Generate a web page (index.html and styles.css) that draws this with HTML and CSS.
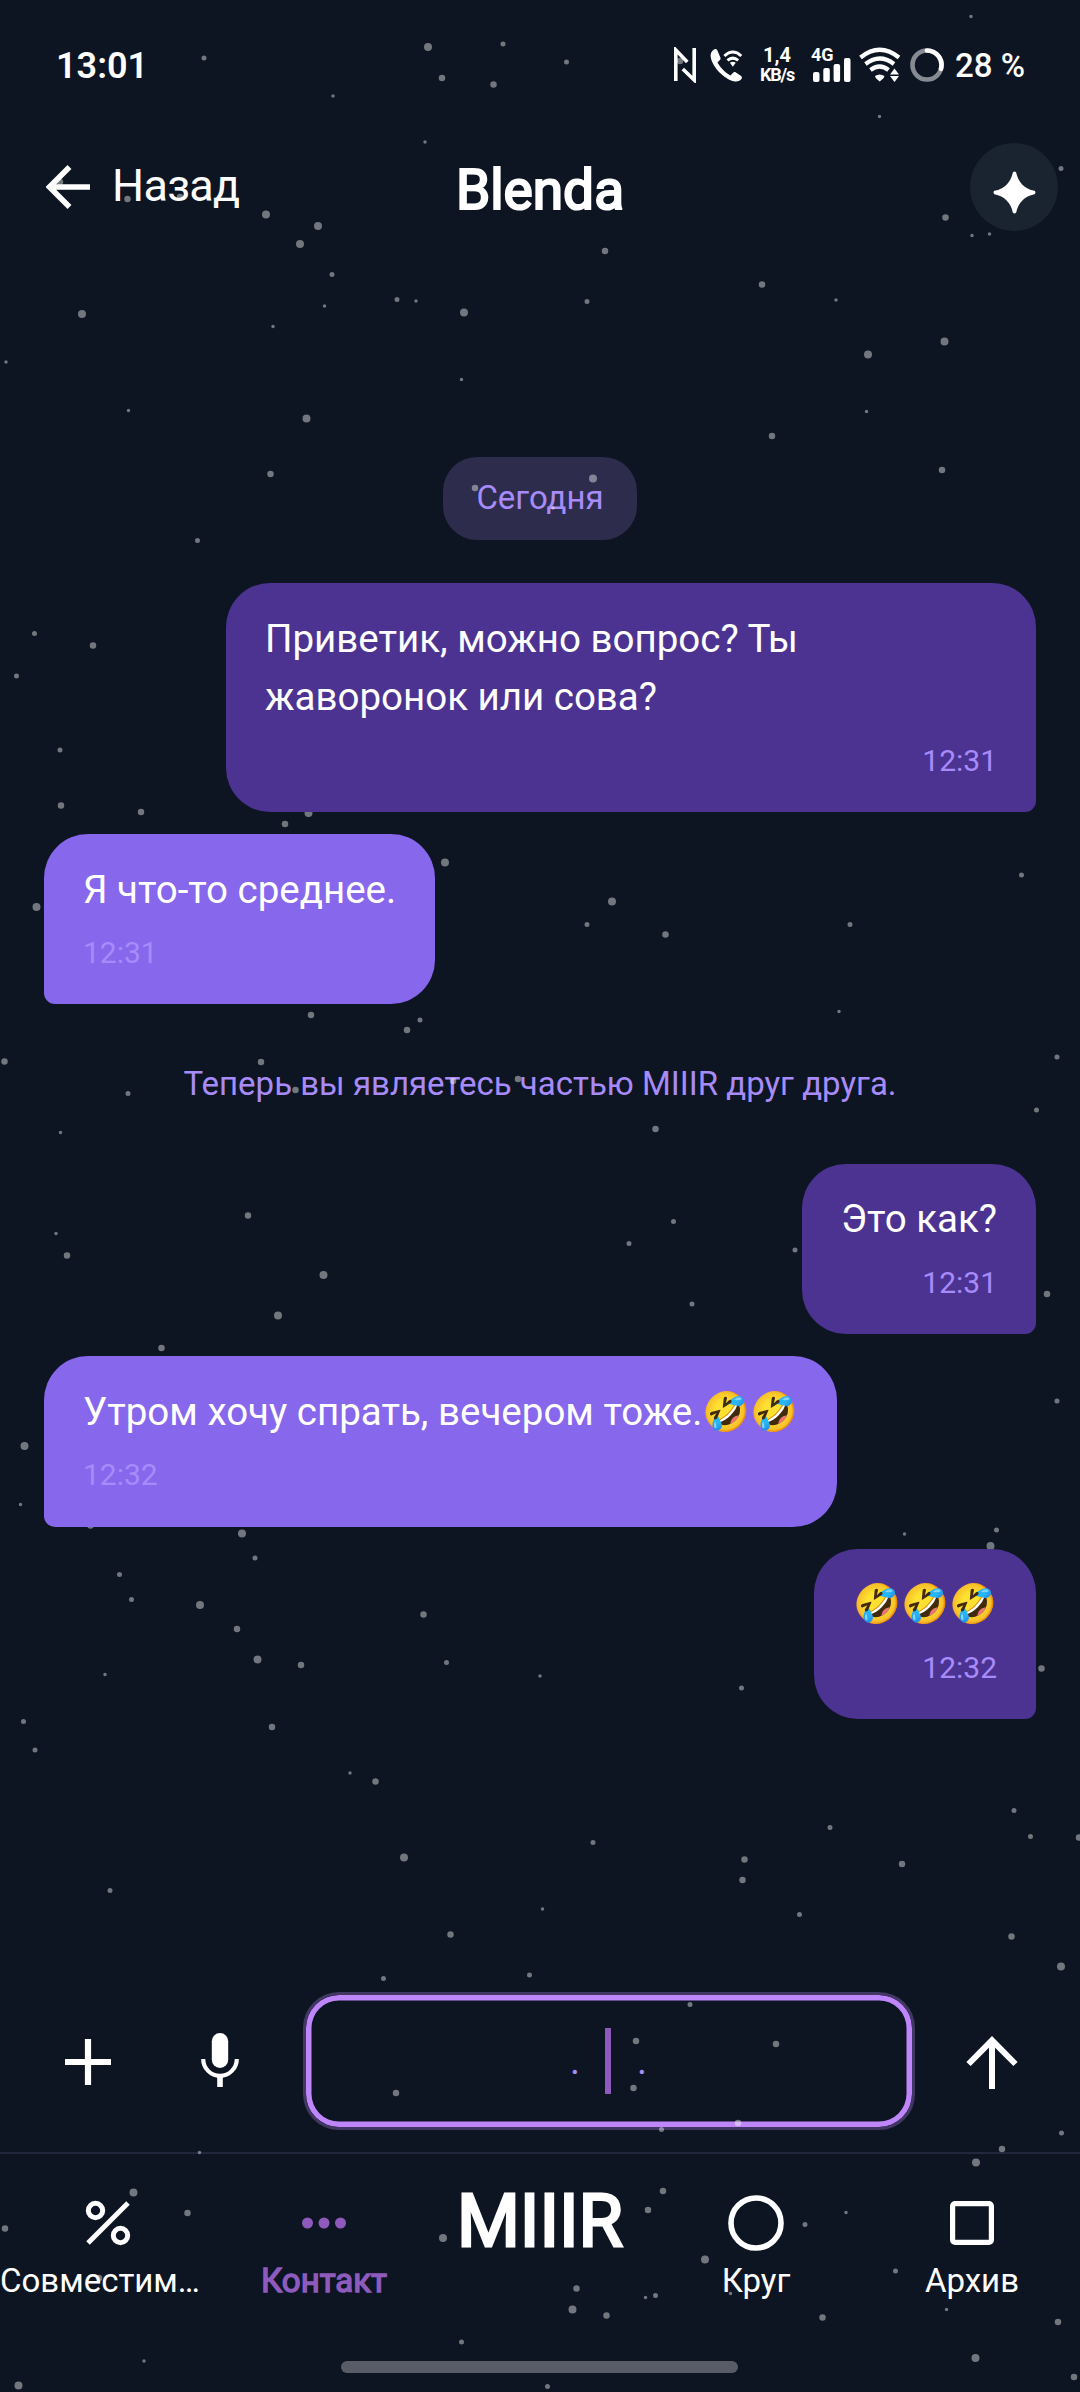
FILE: index.html
```html
<!DOCTYPE html>
<html lang="ru">
<head>
<meta charset="utf-8">
<title>Blenda</title>
<link rel="stylesheet" href="styles.css">
</head>
<body>
<div class="app">
  <svg class="stars" viewBox="0 0 1080 2392" aria-hidden="true">
    <path stroke-width="3.5" d="M324.5 306h0M461.5 379.5h0M333 96h0M425 142h0M416 301h0M273 326.5h0M6 362h0M971 16.5h0M879.5 116.5h0M972 235.5h0M989.5 234h0M836 300h0M128.5 410.5h0M866.5 411.5h0M553 508h0M839 1011.5h0M60.5 1132.5h0M56 1233.5h0M20.5 1504.5h0M904.5 1534h0M105 1674.5h0M350 1773h0M540 1676h0M542.5 1909h0M199.5 2152.5h0M144 2361h0M846 2212.5h0M645.5 2297.5h0M730.5 2293.5h0M946.5 2309.5h0"/>
    <path stroke-width="5" d="M503 44h0M204 58h0M332 274.5h0M397 299.5h0M566.5 62h0M1061 168.5h0M587 301.5h0M197.5 540.5h0M34.5 633.5h0M16.5 676h0M60 750h0M420 1020h0M1021.5 875h0M587 924.5h0M850 924.5h0M128 1093.5h0M1057 1057h0M1036.5 1110h0M673.5 1221.5h0M629 1243.5h0M795 1250h0M692 1304h0M1057 1401h0M996.5 1530h0M255 1558h0M119.5 1574.5h0M131.5 1599.5h0M446.5 1662.5h0M23.5 1721.5h0M35 1750h0M110 1890.5h0M741.5 1688h0M1014 1810.5h0M830 1827.5h0M1030.5 1836.5h0M593 1842.5h0M799.5 1914.5h0M383.5 1978.5h0M529.5 1975h0M461.5 2342h0M690 2004.5h0M661.5 2129.5h0M1061.5 2133h0M805 2224.5h0M895.5 2271h0M655.5 2295.5h0M547.5 2386.5h0"/>
    <path stroke-width="6.5" d="M442 78h0M493.5 84.5h0M60 182h0M127.5 199h0M180 197h0M680 61h0M945.5 217.5h0M605 251h0M762 284.5h0M270.5 474h0M475 488h0M93 645.5h0M61 805.5h0M141 812h0M285 824h0M311 1015h0M407 1030h0M772 436h0M942 470h0M665.5 934.5h0M4.5 1061.5h0M261 1062h0M295.5 1090h0M453 1081h0M518 1079h0M248 1215.5h0M67 1255.5h0M161.5 1348h0M90.5 1525.5h0M655.5 1129h0M1047 1294h0M237 1629h0M301 1665h0M423.5 1614.5h0M272 1727h0M375.5 1781.5h0M450.5 1934.5h0M1041.5 1668.5h0M1079 1837.5h0M744.5 1859.5h0M742.5 1880h0M902 1864h0M1011.5 1936.5h0M396 2093h0M187.5 2213h0M5 2228.5h0M99 2278h0M636 2041h0M776 2044h0M633.5 2088h0M738 2123h0M1002 2149h0M663 2191h0M648 2210h0M576.5 2288.5h0M606.5 2315.5h0M822.5 2317.5h0M1058 2322h0M1074 2377h0"/>
    <path stroke-width="8" d="M428 47h0M266 214.5h0M318 226h0M300 244h0M464 312.5h0M82 314h0M868 354.5h0M944.5 341.5h0M306.5 418.5h0M308.5 813h0M445 862.5h0M36.5 907h0M593 478.5h0M612 901.5h0M323.5 1275h0M278 1315.5h0M24.5 1446h0M242 1533.5h0M200 1605h0M257.5 1659.5h0M404 1857.5h0M990.5 1546h0M133.5 2192.5h0M443 2238h0M18.5 2385.5h0M1061 1966.5h0M976 2162.5h0M705 2259.5h0M572.5 2309.5h0M975.5 2358h0"/>
  </svg>

  <div class="statusbar">
    <span class="clock">13:01</span>
    <div class="indicators">
      <svg class="nfc" viewBox="0 0 24 36" fill="none" stroke="#fff" stroke-width="3.6"><path d="M2.800 34V3l11.500 12M21.200 1v32L9.800 22"/></svg>
      <svg class="call" viewBox="0 0 36 36"><path fill="#fff" d="M5.500 1.200C2.500 2.800 1.200 6 1.800 9.500 3.500 19.500 15 31.500 25.500 34.300c3.500.8 6.500-.2 8-2.600.7-1.200.3-2.300-.8-3.100l-5-3.400c-1.100-.7-2.300-.5-3.100.4l-2.600 2.600C16.800 25.500 11.500 20 8.700 15l2.500-2.600c.8-.8.9-1.900.4-3L8.500 2.400C7.900 1.100 6.700.6 5.500 1.200z"/><path d="M15.800 8.200q8.700-8 17.400 0M19 12.800q5.500-4.800 11 0" fill="none" stroke="#fff" stroke-width="3"/><path d="M21.500 15.200q3-2 6 0l-3 4z" fill="#fff"/></svg>
      <div class="speed"><span>1,4</span><span>KB/s</span></div>
      <div class="cell"><span>4G</span>
        <svg viewBox="0 0 38 24" fill="#fff"><rect x="0" y="14" width="6.500" height="10" rx="2"/><rect x="10.300" y="10" width="6.500" height="14" rx="2"/><rect x="20.600" y="6" width="6.500" height="18" rx="2"/><rect x="31" y="0" width="6.500" height="24" rx="2"/></svg>
      </div>
      <svg class="wifi" viewBox="0 0 42 36"><path d="M1.500 10.500q19.200-15.500 38.500 0M6.500 17q14.200-11 28.500 0M11.500 23q9.200-7 18 0" fill="none" stroke="#fff" stroke-width="4.200"/><path fill="#fff" d="M16 29q4.700-3 9.400 0 0 2-4.700 5.500Q16 31 16 29zM35.500 21.500l4.500 6h-9zM31 29h9l-4.500 6z"/></svg>
      <svg class="battery" viewBox="0 0 34 34" fill="none" stroke-width="4.600"><circle cx="17" cy="17" r="14.500" stroke="#868a91"/><path d="M17 2.500A14.500 14.500 0 0 1 31 20.800" stroke="#fff" stroke-linecap="round"/></svg>
      <span class="percent">28 %</span>
    </div>
  </div>

  <header class="header">
    <a class="back">
      <svg viewBox="0 0 44 44" fill="none" stroke="#fff" stroke-width="5.500"><path d="M23.500 2L3.500 22l20 20M4 22h40"/></svg>
      <span>Назад</span>
    </a>
    <h1>Blenda</h1>
    <button class="spark"><svg viewBox="0 0 44 44"><path fill="#fff" d="M20.300 1.500q1.700-2 3.400 0Q27 17 42.500 20.300q2 1.700 0 3.400Q27 27 23.700 42.500q-1.700 2-3.400 0Q17 27 1.500 23.700q-2-1.700 0-3.400Q17 17 20.300 1.500z"/></svg></button>
  </header>

  <main class="chat">
    <div class="day">Сегодня</div>
    <div class="msg out"><p>Приветик, можно вопрос? Ты жаворонок или сова?</p><time>12:31</time></div>
    <div class="msg in"><p>Я что-то среднее.</p><time>12:31</time></div>
    <div class="notice">Теперь вы являетесь частью MIIIR друг друга.</div>
    <div class="msg out"><p>Это как?</p><time>12:31</time></div>
    <div class="msg in"><p>Утром хочу спрать, вечером тоже.🤣🤣</p><time>12:32</time></div>
    <div class="msg out"><p>🤣🤣🤣</p><time>12:32</time></div>
  </main>

  <div class="composer">
    <svg class="plus" viewBox="0 0 46 46" stroke="#fff" stroke-width="6.200"><path d="M23 0v46M0 23h46"/></svg>
    <svg class="mic" viewBox="0 0 38 54" fill="none" stroke="#fff"><rect x="10.800" y="0" width="16.400" height="35" rx="8.200" fill="#fff" stroke="none"/><path d="M2.200 26a16.800 16.800 0 0 0 33.600 0" stroke-width="4.200"/><path d="M19 42v12" stroke-width="5.600"/></svg>
    <div class="field"><span class="dots">. . .</span><i class="caret"></i></div>
    <svg class="send" viewBox="0 0 52 53" fill="none" stroke="#fff" stroke-width="6"><path d="M2.500 28L26 4.300 49.500 28M26 5v48"/></svg>
  </div>

  <nav class="tabs">
    <a class="tab"><svg viewBox="0 0 56 56" fill="none" stroke="#fff" stroke-width="5"><circle cx="15.500" cy="15.500" r="7.200"/><circle cx="40.500" cy="40.500" r="7.200"/><path d="M48 8L8 48"/></svg><span class="clipped">Совместим…</span></a>
    <a class="tab active"><svg viewBox="0 0 56 56" fill="#8e5bbd"><circle cx="11.500" cy="28" r="5.500"/><circle cx="28" cy="28" r="5.500"/><circle cx="44.500" cy="28" r="5.500"/></svg><span>Контакт</span></a>
    <a class="tab brand">MIIIR</a>
    <a class="tab"><svg viewBox="0 0 56 56" fill="none" stroke="#fff" stroke-width="5.600"><circle cx="28" cy="28" r="25"/></svg><span>Круг</span></a>
    <a class="tab"><svg viewBox="0 0 56 56" fill="none" stroke="#fff" stroke-width="5.200"><rect x="8.600" y="8.600" width="38.800" height="38.800" rx="2.500"/></svg><span>Архив</span></a>
  </nav>
  <div class="homebar"></div>
</div>
</body>
</html>
```
FILE: styles.css
```css
* { box-sizing: border-box; }

body {
  margin: 0;
  background: #0d1522;
  color: #fff;
  font-family: Roboto, "Noto Sans", sans-serif;
}

svg { display: block; flex: none; }
p, h1 { margin: 0; }

.app {
  position: relative;
  width: 1080px;
  height: 2392px;
  overflow: hidden;
  display: flex;
  flex-direction: column;
}

/* star field floats over the bars and under the message bubbles */
.stars {
  position: absolute;
  inset: 0;
  z-index: 1;
  width: 1080px;
  height: 2392px;
  fill: none;
  stroke: #fff;
  stroke-opacity: .42;
  stroke-linecap: round;
  pointer-events: none;
}

.statusbar {
  height: 130px;
  padding: 0 55px 0 56px;
  display: flex;
  justify-content: space-between;
  align-items: center;
}
.clock { padding-top: 2px; font-size: 36px; font-weight: 600; }
.indicators { display: flex; align-items: center; height: 40px; }
.nfc { width: 24px; height: 36px; }
.call { width: 35px; height: 35px; margin-left: 12px; }
.speed {
  width: 34px;
  margin-left: 16px;
  display: flex;
  flex-direction: column;
  align-items: center;
  font-size: 20px;
  line-height: 19px;
  font-weight: 700;
}
.speed span + span { font-size: 18px; letter-spacing: -1.2px; }
.cell { width: 40px; margin-left: 17px; }
.cell span { display: block; height: 10px; font-size: 18px; line-height: 14px; font-weight: 700; }
.cell svg { width: 38px; height: 24px; margin-left: 2px; }
.wifi { width: 42px; height: 36px; margin-left: 8px; }
.battery { width: 34px; height: 34px; margin-left: 9px; }
.percent { margin-left: 11px; font-size: 33px; font-weight: 500; }

.header {
  height: 114px;
  padding: 0 22px;
  display: grid;
  grid-template-columns: 1fr auto 1fr;
  align-items: center;
}
.back {
  margin-left: 24px;
  display: flex;
  align-items: center;
  gap: 22px;
  font-size: 45px;
  line-height: 52px;
  letter-spacing: -.7px;
}
.back svg { width: 44px; height: 44px; }
.back span { margin-top: -2px; }
.header h1 {
  padding-top: 5px;
  font-size: 55px;
  font-weight: 400;
  line-height: 64px;
  -webkit-text-stroke: 2.2px #fff;
}
.spark {
  justify-self: end;
  width: 88px;
  height: 88px;
  padding: 10px 0 0;
  border: 0;
  border-radius: 50%;
  background: #1a2330;
  display: flex;
  align-items: center;
  justify-content: center;
}
.spark svg { width: 43px; height: 43px; }

.chat {
  flex: 1;
  padding: 213px 44px 0;
  display: flex;
  flex-direction: column;
  gap: 22px;
}
.day {
  align-self: center;
  height: 83px;
  margin-bottom: 21.4px;
  padding: 0 33px;
  border-radius: 34px;
  background: #2d2c4d;
  color: #a78bfa;
  font-size: 33px;
  line-height: 81px;
}
.msg {
  z-index: 2;
  max-width: 810px;
  padding: 26.8px 39px 29.2px;
  border-radius: 44px;
  display: flex;
  flex-direction: column;
}
.msg p { font-size: 38.5px; line-height: 58px; }
.msg time { margin-top: 11.5px; font-size: 30px; line-height: 45px; color: #a78bfa; }
.out { align-self: flex-end; background: #4c3391; border-bottom-right-radius: 11px; }
.out time { align-self: flex-end; }
.in { align-self: flex-start; background: #8767ec; border-bottom-left-radius: 11px; }
.notice {
  margin: 33px 0 32.3px;
  text-align: center;
  color: #a78bfa;
  font-size: 33px;
  line-height: 50px;
}

.composer {
  height: 160px;
  padding: 0 61px 0 65px;
  display: flex;
  align-items: flex-start;
}
.plus { width: 46px; height: 46px; margin-top: 47px; }
.mic { width: 38px; height: 54px; margin: 41px 64px 0 90px; }
.field {
  width: 612px;
  height: 138px;
  padding-right: 2px;
  border: 3px solid #423663;
  border-radius: 36px;
  box-shadow: inset 0 0 0 5.5px #bf86fc;
  display: grid;
  place-items: center;
}
.dots, .caret { grid-area: 1 / 1; }
.dots { padding-left: 1px; font-size: 38px; word-spacing: 14px; color: #a78bfa; }
.caret { width: 6px; height: 66px; background: #8e5bbd; }
.send { width: 52px; height: 53px; margin: 44px 0 0 51px; }

.tabs {
  height: 209px;
  border-top: 2px solid #22273d;
  padding-top: 41px;
  display: grid;
  grid-template-columns: repeat(5, 216px);
}
.tab {
  display: flex;
  flex-direction: column;
  align-items: center;
  gap: 9.5px;
  font-size: 33px;
  line-height: 40px;
}
.tab svg { width: 56px; height: 56px; }
.clipped { align-self: flex-start; }
.active { color: #8e5bbd; }
.active span { -webkit-text-stroke: 1.4px #8e5bbd; }
.brand {
  margin-top: -1px;
  font-size: 72px;
  line-height: 56px;
  -webkit-text-stroke: 2.8px #fff;
}

.homebar {
  width: 397px;
  height: 12px;
  margin: 0 auto 19px 341px;
  border-radius: 6px;
  background: #575c66;
}
```
